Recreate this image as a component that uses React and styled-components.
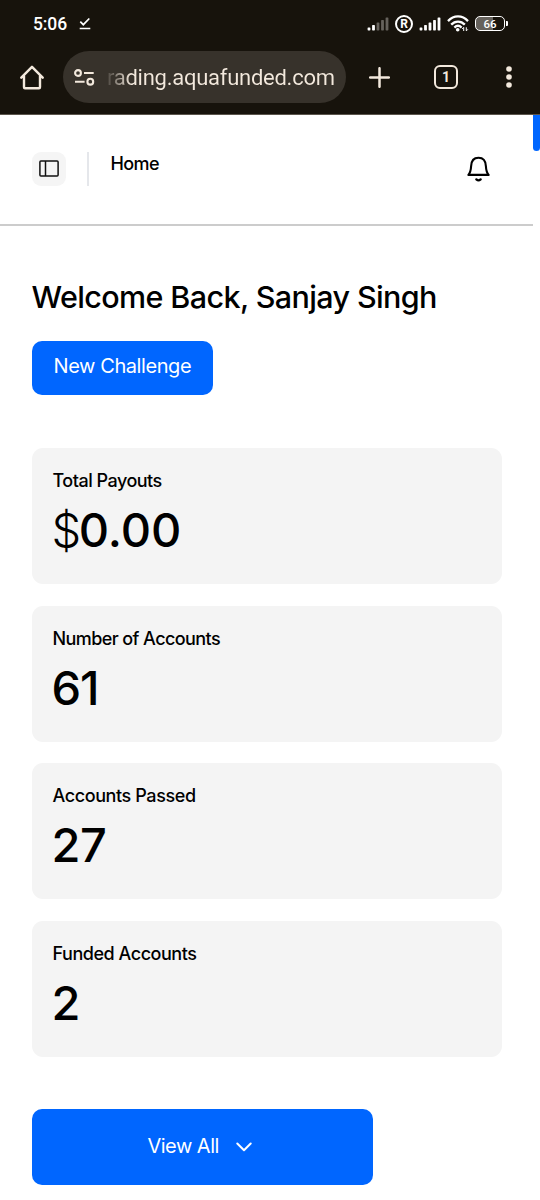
import styled, { createGlobalStyle } from "styled-components";

const stats = [
  { label: "Total Payouts", value: "0.00", currency: "$", space: "-0.5px", valueSpace: "0px" },
  { label: "Number of Accounts", value: "61", space: "-0.58px", valueSpace: "-1px" },
  { label: "Accounts Passed", value: "27", space: "-0.4px", valueSpace: "-0.5px" },
  { label: "Funded Accounts", value: "2", space: "-0.46px", valueSpace: "-1px" },
];

const Signal = ({ active }) => (
  <svg width="22" height="14" viewBox="0 0 22 14">
    {[0, 1, 2, 3, 4].map((i) => (
      <rect
        key={i}
        x={0.6 + i * 4.5}
        y={10.4 - i * 2.5}
        width="2.8"
        height={3 + i * 2.5}
        rx="0.7"
        fill={i < active ? "#fff" : "#66625c"}
      />
    ))}
  </svg>
);

const Wifi = () => (
  <svg width="22" height="17" viewBox="0 0 22 17" fill="none" stroke="#fff" strokeWidth="2.3">
    <path d="M1 6.1C6.8-.1 15.2-.1 21 6.1" />
    <path d="M4.2 9.6c3.9-4.1 9.7-4.1 13.6 0" />
    <path d="M7.4 12.6c2.2-2.2 5-2.2 7.2 0" />
    <circle cx="10.7" cy="14.7" r="1.8" fill="#fff" stroke="none" />
    <path d="M16.7 16v-3.6l-1.5 1.5M19.3 12.3v3.6l1.5-1.5" strokeWidth="1" />
  </svg>
);

const App = () => {
  return (
    <>
      <GlobalStyle />
      <Screen>
        <StatusBar>
          <Clock>5:06</Clock>
          <svg width="12" height="13" viewBox="0 0 12 13" fill="none" stroke="#fff" strokeWidth="1.7">
            <path d="M1.3 4.7l3 3L10.3 1.5M.7 11.5h10.6" />
          </svg>
          <StatusIcons>
            <Signal active={2} />
            <Registered>R</Registered>
            <Signal active={5} />
            <Wifi />
            <Battery>
              <span>66</span>
            </Battery>
          </StatusIcons>
        </StatusBar>

        <Toolbar>
          <svg width="24" height="25" viewBox="0 0 24 25" fill="none" stroke="#f3e9dd" strokeWidth="2.4" strokeLinejoin="round" strokeLinecap="round">
            <path d="M1.300 12.7L12 1.800l10.700 10.900M4 10.700v11.500a1 1 0 0 0 1 1h14a1 1 0 0 0 1-1V10.700" />
          </svg>
          <AddressBar>
            <svg width="21" height="17" viewBox="0 0 21 17" fill="none" stroke="#f3e9dd" strokeWidth="2.1">
              <circle cx="4" cy="4" r="2.9" />
              <path d="M10 4h9.700M1 12.700h9.600" />
              <circle cx="16.3" cy="12.7" r="2.9" />
            </svg>
            <Url>rading.aquafunded.com</Url>
          </AddressBar>
          <svg width="21" height="21" viewBox="0 0 21 21" stroke="#f3e9dd" strokeWidth="2.5" strokeLinecap="round">
            <path d="M10.500 1.200v18.600M1.200 10.500h18.600" />
          </svg>
          <TabCount>1</TabCount>
          <svg width="6" height="22" viewBox="0 0 6 22" fill="#f3e9dd">
            <circle cx="3" cy="3" r="2.8" />
            <circle cx="3" cy="11" r="2.8" />
            <circle cx="3" cy="19" r="2.8" />
          </svg>
        </Toolbar>

        <Page>
          <Content>
            <Header>
              <SidebarButton>
                <svg width="20" height="17" viewBox="0 0 20 17" fill="none" stroke="#111" strokeWidth="1.5">
                  <rect x="0.9" y="0.9" width="18.2" height="15.2" rx="1" />
                  <path d="M6.500 1v15" />
                </svg>
              </SidebarButton>
              <Divider />
              <Crumb>Home</Crumb>
              <svg width="23" height="26" viewBox="0 0 23 26" fill="none" stroke="#000" strokeWidth="2.1" strokeLinejoin="round" strokeLinecap="round">
                <path d="M1.400 18.900C3.400 16.500 3.900 14 4.100 10.200 4.300 4.900 6.800 1.700 11.500 1.700s7.200 3.200 7.400 8.500c.2 3.800.7 6.300 2.700 8.700z" />
                <path d="M9.400 23.400c1.200 1.100 3 1.100 4.200 0" strokeWidth="2.300" />
              </svg>
            </Header>

            <Dashboard>
              <Title>Welcome Back, Sanjay Singh</Title>
              <NewChallenge>New Challenge</NewChallenge>
              <Cards>
                {stats.map((item) => (
                  <Card key={item.label}>
                    <Label $space={item.space}>{item.label}</Label>
                    <Value $space={item.valueSpace}>
                      {item.currency && <Currency>{item.currency}</Currency>}
                      {item.value}
                    </Value>
                  </Card>
                ))}
              </Cards>
              <ViewAll>
                <span>View All</span>
                <svg width="16" height="10" viewBox="0 0 16 10" fill="none" stroke="#fff" strokeWidth="2" strokeLinecap="round" strokeLinejoin="round">
                  <path d="M1.300 1.500L8 8.200l6.700-6.700" />
                </svg>
              </ViewAll>
            </Dashboard>
          </Content>
          <ScrollTrack>
            <ScrollThumb />
          </ScrollTrack>
        </Page>
      </Screen>
    </>
  );
};

export default App;

const GlobalStyle = createGlobalStyle`
  * {
    box-sizing: border-box;
  }
  body {
    margin: 0;
    background: #fff;
    font-family: Inter, "Liberation Sans", sans-serif;
  }
  svg {
    display: block;
    flex-shrink: 0;
  }
`;

const Screen = styled.div`
  width: 540px;
  height: 1200px;
  overflow: hidden;
  display: flex;
  flex-direction: column;
`;

const StatusBar = styled.div`
  height: 47px;
  flex-shrink: 0;
  display: flex;
  align-items: center;
  padding: 0 32px 0 33px;
  background: #17130c;
  color: #fff;
`;

const Clock = styled.span`
  width: 46px;
  font: 500 17.5px/20px Roboto, sans-serif;
  letter-spacing: -0.1px;
`;

const StatusIcons = styled.div`
  display: flex;
  align-items: center;
  gap: 6px;
  margin-left: auto;
`;

const Registered = styled.span`
  width: 18px;
  height: 18px;
  border: 2px solid #fff;
  border-radius: 50%;
  display: flex;
  align-items: center;
  justify-content: center;
  font: 700 12px/14px Roboto, sans-serif;
`;

const Battery = styled.div`
  display: flex;
  align-items: center;
  span {
    width: 30px;
    height: 15px;
    border: 1.5px solid #fff;
    border-radius: 5px;
    background: linear-gradient(90deg, #66625c 62%, transparent 62%);
    font: 500 11.5px/15px Roboto, sans-serif;
    text-align: center;
  }
  &::after {
    content: "";
    width: 2px;
    height: 5px;
    margin-left: 1px;
    border-radius: 0 1px 1px 0;
    background: #fff;
  }
`;

const Toolbar = styled.div`
  height: 68px;
  flex-shrink: 0;
  display: flex;
  align-items: center;
  padding: 0 28px 7px 20px;
  background: #17130c;
  border-bottom: 1px solid #5b554c;
`;

const AddressBar = styled.div`
  width: 283px;
  height: 52px;
  margin: 0 23px 0 19px;
  padding-left: 11px;
  border-radius: 26px;
  background: #37322b;
  display: flex;
  align-items: center;
  gap: 12px;
`;

const Url = styled.span`
  padding-top: 1px;
  font: 400 22px/28px Roboto, sans-serif;
  letter-spacing: -0.26px;
  white-space: nowrap;
  color: transparent;
  background: linear-gradient(90deg, #4a453e 0, #f3e9dd 24px);
  background-clip: text;
`;

const TabCount = styled.span`
  width: 24px;
  height: 24px;
  margin: 0 48px 0 44px;
  border: 2.5px solid #f3e9dd;
  border-radius: 6px;
  color: #f3e9dd;
  font: 700 14px/20px Roboto, sans-serif;
  text-align: center;
`;

const Page = styled.div`
  flex: 1;
  min-height: 0;
  display: flex;
`;

const Content = styled.main`
  flex: 1;
  color: #000;
`;

const ScrollTrack = styled.div`
  width: 7px;
`;

const ScrollThumb = styled.div`
  height: 36px;
  border-radius: 0 0 4px 4px;
  background: #0066ff;
`;

const Header = styled.header`
  height: 111px;
  display: flex;
  align-items: center;
  padding: 0 43px 2px 31.5px;
  border-bottom: 2px solid #ccc;
`;

const SidebarButton = styled.button`
  width: 34px;
  height: 34px;
  padding: 0;
  border: none;
  border-radius: 9px;
  background: #f5f5f5;
  display: flex;
  align-items: center;
  justify-content: center;
`;

const Divider = styled.div`
  width: 2px;
  height: 34px;
  margin: 0 22px 0 21px;
  background: #e5e7eb;
`;

const Crumb = styled.span`
  flex: 1;
  padding-bottom: 10px;
  font-size: 18px;
  font-weight: 500;
  line-height: 24px;
  letter-spacing: -0.6px;
`;

const Dashboard = styled.section`
  padding: 50px 31px 0 31.5px;
`;

const Title = styled.h1`
  margin: 0;
  font-size: 30.5px;
  font-weight: 500;
  line-height: 42px;
  letter-spacing: -0.62px;
  white-space: nowrap;
`;

const NewChallenge = styled.button`
  width: 181.700px;
  height: 54px;
  margin-top: 23px;
  padding: 0 0 4px;
  border: none;
  border-radius: 10px;
  background: #0066ff;
  color: #fff;
  font: 400 20px/24px Inter, sans-serif;
  letter-spacing: -0.42px;
  display: flex;
  align-items: center;
  justify-content: center;
  white-space: nowrap;
`;

const Cards = styled.div`
  display: flex;
  flex-direction: column;
  gap: 21.2px;
  margin-top: 53.2px;
`;

const Card = styled.article`
  height: 136.3px;
  padding: 20px 21px;
  border-radius: 11px;
  background: #f4f4f4;
`;

const Label = styled.div`
  font-size: 18px;
  font-weight: 500;
  line-height: 25px;
  letter-spacing: ${({ $space }) => $space};
`;

const Value = styled.div`
  font-size: 47px;
  font-weight: 500;
  line-height: 60px;
  margin-top: 7px;
  margin-left: -1px;
  letter-spacing: ${({ $space }) => $space};
`;

const Currency = styled.span`
  font-weight: 300;
  letter-spacing: -2.5px;
`;

const ViewAll = styled.button`
  width: 341.300px;
  height: 76px;
  margin-top: 52.3px;
  padding: 0 5px 3px 0;
  border: none;
  border-radius: 10px;
  background: #0066ff;
  color: #fff;
  font: 400 20px/24px Inter, sans-serif;
  letter-spacing: -0.5px;
  display: flex;
  align-items: center;
  justify-content: center;
  gap: 17px;

  svg {
    margin-top: 2px;
  }
`;
